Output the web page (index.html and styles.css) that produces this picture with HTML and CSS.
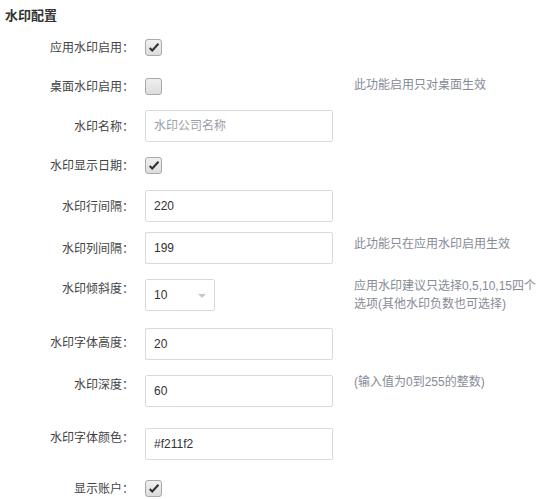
FILE: index.html
```html
<!DOCTYPE html>
<html lang="zh-CN">
<head>
<meta charset="utf-8">
<title>水印配置</title>
<link rel="stylesheet" href="styles.css">
</head>
<body>
<div class="panel">
  <h2 class="title">水印配置</h2>

  <div class="row r1">
    <label class="label">应用水印启用<span class="colon">：</span></label>
    <div class="control"><span class="check on"><svg viewBox="0 0 16 16" width="16" height="16"><path d="M3 8.7 L6.3 11.9 L13.2 4.4 L11.7 3.1 L6.2 9.1 L4.4 7.2 Z" fill="#2f2f2f"/></svg></span></div>
  </div>

  <div class="row r2">
    <label class="label">桌面水印启用<span class="colon">：</span></label>
    <div class="control"><span class="check"></span></div>
    <div class="hint hint-mid">此功能启用只对桌面生效</div>
  </div>

  <div class="row r3">
    <label class="label">水印名称<span class="colon">：</span></label>
    <div class="control"><div class="input placeholder">水印公司名称</div></div>
  </div>

  <div class="row r4">
    <label class="label">水印显示日期<span class="colon">：</span></label>
    <div class="control"><span class="check on"><svg viewBox="0 0 16 16" width="16" height="16"><path d="M3 8.7 L6.3 11.9 L13.2 4.4 L11.7 3.1 L6.2 9.1 L4.4 7.2 Z" fill="#2f2f2f"/></svg></span></div>
  </div>

  <div class="row r5">
    <label class="label">水印行间隔<span class="colon">：</span></label>
    <div class="control"><div class="input">220</div></div>
  </div>

  <div class="row r6">
    <label class="label">水印列间隔<span class="colon">：</span></label>
    <div class="control"><div class="input">199</div></div>
    <div class="hint hint-r6">此功能只在应用水印启用生效</div>
  </div>

  <div class="row r7">
    <label class="label label-top">水印倾斜度<span class="colon">：</span></label>
    <div class="control"><div class="select"><span>10</span><i class="caret"></i></div></div>
    <div class="hint hint-top">应用水印建议只选择0,5,10,15四个选项(其他水印负数也可选择)</div>
  </div>

  <div class="row r8">
    <label class="label label-high">水印字体高度<span class="colon">：</span></label>
    <div class="control"><div class="input">20</div></div>
  </div>

  <div class="row r9">
    <label class="label label-top">水印深度<span class="colon">：</span></label>
    <div class="control"><div class="input">60</div></div>
    <div class="hint hint-top">(输入值为0到255的整数)</div>
  </div>

  <div class="row r10">
    <label class="label label-top">水印字体颜色<span class="colon">：</span></label>
    <div class="control"><div class="input">#f211f2</div></div>
  </div>

  <div class="row r11">
    <label class="label">显示账户<span class="colon">：</span></label>
    <div class="control"><span class="check on"><svg viewBox="0 0 16 16" width="16" height="16"><path d="M3 8.7 L6.3 11.9 L13.2 4.4 L11.7 3.1 L6.2 9.1 L4.4 7.2 Z" fill="#2f2f2f"/></svg></span></div>
  </div>
</div>
</body>
</html>
```

FILE: styles.css
```css
* { box-sizing: border-box; }
html, body { margin: 0; padding: 0; background: #fff; }
body {
  font-family: "Liberation Sans", "Noto Sans CJK SC", sans-serif;
  font-size: 12px;
  color: #444;
  overflow: hidden;
}
.panel { padding: 0 0 0 5px; }
.title {
  margin: 7px 0 0 0;
  font-size: 13px;
  line-height: 18px;
  font-weight: bold;
  color: #333;
}
.row {
  display: flex;
  align-items: flex-start;
  height: 32px;
  margin-left: -5px;
}
.r1 { margin-top: 6px; }
.r2 { margin-top: 7px; }
.r3 { margin-top: 8px; }
.r4 { margin-top: 7px; }
.r5 { margin-top: 9px; }
.r6 { margin-top: 10px; }
.r7 { margin-top: 15px; }
.r8 { margin-top: 17px; }
.r9 { margin-top: 15px; }
.r10 { margin-top: 21px; }
.r11 { margin-top: 12px; }

.label {
  width: 145px;
  flex: none;
  padding-right: 11px;
  text-align: right;
  line-height: 32px;
  color: #444;
  white-space: nowrap;
}
.colon { font-family: "Noto Sans CJK JP", sans-serif; }
.label-top { line-height: 18px; }
.label-high { line-height: 28px; }
.control { width: 188px; flex: none; }
.check {
  display: block;
  width: 17px;
  height: 17px;
  margin-top: 8px;
  border: 1px solid #a9a9a9;
  border-radius: 3px;
  background: linear-gradient(#f0f0f0, #dcdcdc);
}
.check svg { display: block; margin: 0; }
.input {
  height: 32px;
  border: 1px solid #dadada;
  border-radius: 2px;
  padding: 0 8px;
  line-height: 30px;
  font-size: 12px;
  color: #333;
  background: #fff;
}
.placeholder { color: #9a9ea6; }
.select {
  width: 70px;
  height: 32px;
  border: 1px solid #dadada;
  border-radius: 2px;
  padding: 0 8px 0 8px;
  display: flex;
  align-items: center;
  justify-content: space-between;
  color: #333;
}
.caret {
  width: 0;
  height: 0;
  border-left: 4px solid transparent;
  border-right: 4px solid transparent;
  border-top: 4px solid #c8c8c8;
  margin-top: 1px;
}
.hint {
  margin-left: 21px;
  width: 185px;
  flex: none;
  color: #858b96;
  line-height: 18px;
}
.hint-mid { line-height: 30px; }
.hint-r6 { padding-top: 3px; }
.hint-top { margin-top: -2px; }
```
